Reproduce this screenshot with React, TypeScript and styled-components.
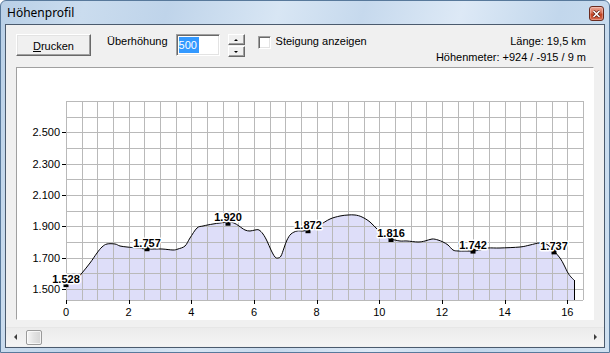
import styled, { createGlobalStyle } from "styled-components";

const GlobalStyle = createGlobalStyle`
	html, body {
		margin: 0;
		padding: 0;
		background: #ffffff;
	}
	body {
		font-family: "Liberation Sans", Arial, sans-serif;
		font-size: 11px;
		color: #000;
	}
`;

// Höhe in Metern / Strecke in km auf Bildpunkte im Diagramm
const X0 = 66;
const PX_PER_KM = 31.333;
const Y_1500 = 289;
const PX_PER_M = 31.333 / 200;
const GRID_TOP = 101;
const GRID_BOTTOM = 300;
const GRID_RIGHT = 583;

const xAt = (km: number) => X0 + km * PX_PER_KM;
const yAt = (m: number) => Y_1500 - (m - 1500) * PX_PER_M;
const fmt = (m: number) => `${Math.floor(m / 1000)}.${String(m % 1000).padStart(3, "0")}`;

const profile: [number, number][] = [
	[66, 284], [70, 283], [75, 281], [82, 273], [90, 263], [97, 253], [102, 247], [107, 244],
	[115, 244], [120, 246], [127, 247], [137, 248], [147, 249], [162, 249], [173, 250], [178, 249],
	[185, 246], [190, 238], [197, 228], [203, 226], [213, 224], [220, 223], [228, 222], [234, 223],
	[239, 226], [245, 230], [250, 231], [255, 230], [259, 230], [263, 234], [267, 241], [271, 250],
	[275, 257], [278, 258], [281, 256], [284, 248], [287, 240], [291, 234], [297, 231], [303, 231],
	[308, 230], [315, 228], [320, 225], [330, 219], [340, 216], [348, 215], [355, 215], [362, 217],
	[370, 222], [378, 230], [385, 236], [391, 239], [400, 241], [407, 241], [418, 242], [425, 241],
	[432, 239], [438, 240], [443, 242], [448, 245], [453, 250], [458, 251], [465, 251], [473, 251],
	[480, 250], [488, 248], [500, 248], [520, 247], [530, 245], [540, 243], [548, 245], [554, 251],
	[560, 258], [564, 265], [568, 273], [571, 277], [574, 280],
];

const peaks = [
	{ x: 66, m: 1528 },
	{ x: 147, m: 1757 },
	{ x: 228, m: 1920 },
	{ x: 308, m: 1872 },
	{ x: 391, m: 1816 },
	{ x: 473, m: 1742 },
	{ x: 554, m: 1737 },
];

const smoothPath = (pts: [number, number][]) => {
	let d = `M${pts[0][0]},${pts[0][1]}`;
	for (let i = 0; i < pts.length - 1; i++) {
		const p0 = pts[i - 1] || pts[i];
		const p1 = pts[i];
		const p2 = pts[i + 1];
		const p3 = pts[i + 2] || p2;
		const c1x = p1[0] + (p2[0] - p0[0]) / 6;
		const c1y = p1[1] + (p2[1] - p0[1]) / 6;
		const c2x = p2[0] - (p3[0] - p1[0]) / 6;
		const c2y = p2[1] - (p3[1] - p1[1]) / 6;
		d += ` C${c1x.toFixed(1)},${c1y.toFixed(1)} ${c2x.toFixed(1)},${c2y.toFixed(1)} ${p2[0]},${p2[1]}`;
	}
	return d;
};

const Chart = () => {
	const line = smoothPath(profile);
	const last = profile[profile.length - 1];
	const area = `${line} L${last[0]},${GRID_BOTTOM} L${X0},${GRID_BOTTOM} Z`;

	const vLines = Array.from({ length: 34 }, (_, i) => Math.round(X0 + i * 15.667) + 0.5);
	const hLines = [
		...Array.from({ length: 13 }, (_, j) => Math.round(GRID_TOP + j * 15.667) + 0.5),
		GRID_BOTTOM + 0.5,
	];
	const yTicks = [2500, 2300, 2100, 1900, 1700, 1500];
	const xTicks = [0, 2, 4, 6, 8, 10, 12, 14, 16];

	return (
		<svg width="576" height="251" viewBox="17 68 576 251" fontFamily='"Liberation Sans", Arial, sans-serif'>
			<path d={area} fill="#dedef9" />
			<g stroke="#b9b9b9" strokeWidth="1" shapeRendering="crispEdges">
				{vLines.map((x) => (
					<line key={`v${x}`} x1={x} y1={GRID_TOP} x2={x} y2={GRID_BOTTOM} />
				))}
				{hLines.map((y) => (
					<line key={`h${y}`} x1={X0} y1={y} x2={GRID_RIGHT} y2={y} />
				))}
			</g>
			<g stroke="#000" strokeWidth="1" shapeRendering="crispEdges">
				{yTicks.map((m) => (
					<line key={m} x1={62} y1={Math.round(yAt(m)) + 0.5} x2={66} y2={Math.round(yAt(m)) + 0.5} />
				))}
				{xTicks.map((k) => (
					<line key={k} x1={Math.round(xAt(k)) + 0.5} y1={300} x2={Math.round(xAt(k)) + 0.5} y2={304} />
				))}
			</g>
			<g fontSize="11" fill="#000">
				{yTicks.map((m) => (
					<text key={m} x={60} y={yAt(m) + 4} textAnchor="end">
						{fmt(m)}
					</text>
				))}
				{xTicks.map((k) => (
					<text key={k} x={xAt(k)} y={316} textAnchor="middle">
						{k}
					</text>
				))}
			</g>
			<path d={line} fill="none" stroke="#000" strokeWidth="1" />
			<line x1={last[0] + 0.5} y1={last[1]} x2={last[0] + 0.5} y2={GRID_BOTTOM} stroke="#000" />
			{peaks.map((p) => (
				<rect key={`r${p.m}`} x={p.x - 2.5} y={yAt(p.m) - 2.5} width="5" height="5" fill="#000" />
			))}
			<g fontSize="11" fontWeight="bold" textAnchor="middle">
				{peaks.map((p) => (
					<text
						key={`t${p.m}`}
						x={p.x}
						y={yAt(p.m) - 2}
						fill="#000"
						stroke="#fff"
						strokeWidth="3"
						strokeLinejoin="round"
						paintOrder="stroke"
					>
						{fmt(p.m)}
					</text>
				))}
			</g>
		</svg>
	);
};

const App = () => {
	return (
		<>
			<GlobalStyle />
			<Window>
				<TitleBar>
					<Title>Höhenprofil</Title>
					<CloseButton>
						<svg width="9" height="8" viewBox="0 0 9 8">
							<path d="M1.5 1 L7.5 7 M7.5 1 L1.5 7" stroke="#5a1a10" strokeWidth="3" />
							<path d="M1.5 1 L7.5 7 M7.5 1 L1.5 7" stroke="#fff" strokeWidth="1.6" />
						</svg>
					</CloseButton>
				</TitleBar>
				<Client>
					<Toolbar>
						<PrintButton>
							<u>D</u>rucken
						</PrintButton>
						<FieldLabel>Überhöhung</FieldLabel>
						<SpinField>
							<Selected>500</Selected>
						</SpinField>
						<Spinner>
							<SpinButton>
								<Arrow $dir="up" />
							</SpinButton>
							<SpinButton>
								<Arrow $dir="down" />
							</SpinButton>
						</Spinner>
						<CheckBox />
						<CheckLabel>Steigung anzeigen</CheckLabel>
						<InfoBlock>
							<div>Länge: 19,5 km</div>
							<div>Höhenmeter: +924 / -915 / 9 m</div>
						</InfoBlock>
					</Toolbar>
					<ChartPanel>
						<Chart />
					</ChartPanel>
					<ScrollBar>
						<ScrollArrow>
							<Arrow $dir="left" />
						</ScrollArrow>
						<Thumb />
						<Track />
						<ScrollArrow>
							<Arrow $dir="right" />
						</ScrollArrow>
					</ScrollBar>
				</Client>
			</Window>
		</>
	);
};

export default App;

const Window = styled.div`
	width: 610px;
	height: 353px;
	box-sizing: border-box;
	display: flex;
	flex-direction: column;
	padding: 0 4px 4px;
	border: 1px solid #58799b;
	border-radius: 6px 6px 0 0;
	background: linear-gradient(
		105deg,
		#b9d0e7 0%,
		#cadcee 12%,
		#bfd4ea 24%,
		#d8e6f4 40%,
		#c6d9ed 52%,
		#dde9f6 66%,
		#c2d7ec 80%,
		#d0e1f1 100%
	);
`;

const TitleBar = styled.div`
	height: 23px;
	display: flex;
	align-items: flex-start;
	justify-content: space-between;
	padding-left: 2px;
`;

const Title = styled.span`
	font-family: "Noto Sans", "Open Sans", sans-serif;
	font-size: 12px;
	line-height: 16px;
	margin-top: 4px;
	color: #000;
`;

const CloseButton = styled.div`
	width: 15px;
	height: 15px;
	margin-top: 5px;
	margin-right: 1px;
	box-sizing: border-box;
	display: flex;
	align-items: center;
	justify-content: center;
	border: 1px solid #6b2b1f;
	border-radius: 3px;
	background: linear-gradient(#eba493 0%, #d9735a 45%, #c2401f 55%, #d86a50 100%);
	box-shadow: inset 0 0 0 1px rgba(255, 255, 255, 0.3);
`;

const Client = styled.div`
	flex: 1;
	display: flex;
	flex-direction: column;
	border: 1px solid #4b5b6e;
	background: #f0f0f0;
	min-height: 0;
`;

const Toolbar = styled.div`
	height: 42px;
	display: flex;
	align-items: flex-start;
	padding: 0 18px 0 10px;
`;

const PrintButton = styled.div`
	width: 75px;
	height: 22px;
	margin-top: 9px;
	box-sizing: border-box;
	display: flex;
	align-items: center;
	justify-content: center;
	border: 1px solid;
	border-color: #ffffff #696969 #696969 #ffffff;
	box-shadow: inset -1px -1px #a0a0a0, inset 1px 1px #e3e3e3;
	background: #f0f0f0;
	font-size: 11px;
	padding-top: 1px;
`;

const FieldLabel = styled.span`
	margin: 10px 0 0 16px;
	line-height: 13px;
`;

const SpinField = styled.div`
	width: 44px;
	height: 22px;
	margin: 9px 0 0 8px;
	box-sizing: border-box;
	border: 1px solid;
	border-color: #a0a0a0 #ffffff #ffffff #a0a0a0;
	box-shadow: inset 1px 1px #696969, inset -1px -1px #e3e3e3;
	background: #ffffff;
	padding: 2px 0 0 2px;
`;

const Selected = styled.span`
	display: inline-block;
	height: 16px;
	line-height: 16px;
	padding-right: 2px;
	background: #3399ff;
	color: #ffffff;
`;

const Spinner = styled.div`
	margin: 9px 0 0 8px;
	display: flex;
	flex-direction: column;
	gap: 1px;
`;

const SpinButton = styled.div`
	width: 17px;
	height: 11px;
	box-sizing: border-box;
	display: flex;
	align-items: center;
	justify-content: center;
	border: 1px solid;
	border-color: #ffffff #696969 #696969 #ffffff;
	box-shadow: inset -1px -1px #a0a0a0;
	background: #f0f0f0;
`;

const Arrow = styled.span<{ $dir: "up" | "down" | "left" | "right" }>`
	width: 0;
	height: 0;
	border-style: solid;
	border-color: transparent;
	${({ $dir }) =>
		$dir === "up"
			? "border-width: 0 2px 2px 2px; border-bottom-color: #000;"
			: $dir === "down"
			? "border-width: 2px 2px 0 2px; border-top-color: #000;"
			: $dir === "left"
			? "border-width: 3px 3px 3px 0; border-right-color: #3c3c3c;"
			: "border-width: 3px 0 3px 3px; border-left-color: #3c3c3c;"}
`;

const CheckBox = styled.div`
	width: 13px;
	height: 13px;
	margin: 11px 0 0 13px;
	box-sizing: border-box;
	border: 1px solid;
	border-color: #a0a0a0 #ffffff #ffffff #a0a0a0;
	box-shadow: inset 1px 1px #696969, inset -1px -1px #e3e3e3;
	background: #ffffff;
`;

const CheckLabel = styled.span`
	margin: 10px 0 0 5px;
	line-height: 13px;
`;

const InfoBlock = styled.div`
	margin: 8px 0 0 auto;
	text-align: right;
	line-height: 16px;
`;

const ChartPanel = styled.div`
	height: 253px;
	margin: 0 10px;
	box-sizing: border-box;
	border: 1px solid;
	border-color: #a0a0a0 #ffffff #ffffff #a0a0a0;
	background: #ffffff;
	overflow: hidden;

	svg {
		display: block;
	}
`;

const ScrollBar = styled.div`
	height: 18px;
	margin: auto 0 1px;
	display: flex;
	align-items: center;
	border-top: 1px solid #e6e6e6;
	background: linear-gradient(#ebebeb, #f4f4f4);
`;

const ScrollArrow = styled.div`
	width: 18px;
	height: 17px;
	display: flex;
	align-items: center;
	justify-content: center;
`;

const Thumb = styled.div`
	width: 16px;
	height: 15px;
	margin-left: 2px;
	box-sizing: border-box;
	border: 1px solid #9a9a9a;
	border-radius: 2px;
	background: linear-gradient(90deg, #f6f6f6, #e2e2e2 50%, #d5d5d5);
	box-shadow: inset 0 0 0 1px rgba(255, 255, 255, 0.7);
`;

const Track = styled.div`
	flex: 1;
`;
